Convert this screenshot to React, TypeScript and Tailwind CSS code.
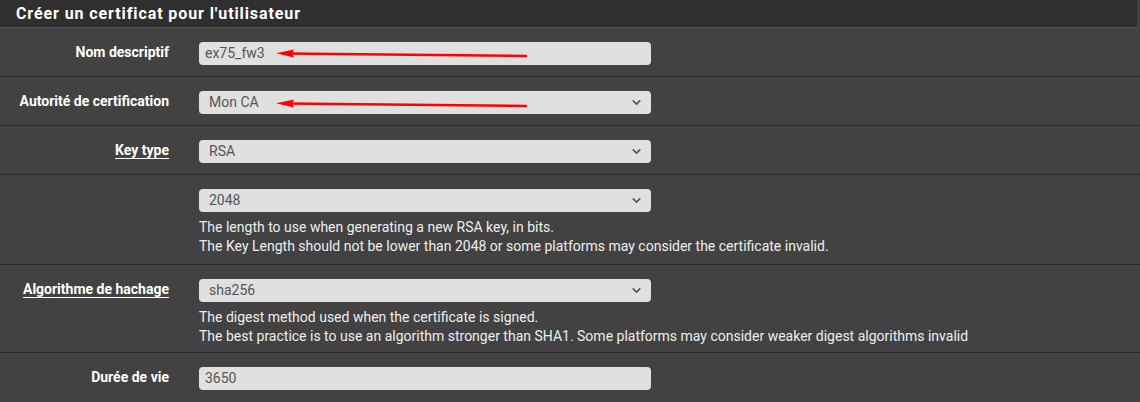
import { ChevronDown } from "lucide-react";

type Row = {
  label?: string;
  link?: boolean;
  value: string;
  select?: boolean;
  help?: string[];
  h: string;
};

const rows: Row[] = [
  { label: "Nom descriptif", value: "ex75_fw3", h: "h-[49px]" },
  { label: "Autorité de certification", value: "Mon CA", select: true, h: "h-[49px]" },
  { label: "Key type", link: true, value: "RSA", select: true, h: "h-[49px]" },
  {
    value: "2048",
    select: true,
    h: "h-[90px]",
    help: [
      "The length to use when generating a new RSA key, in bits.",
      "The Key Length should not be lower than 2048 or some platforms may consider the certificate invalid.",
    ],
  },
  {
    label: "Algorithme de hachage",
    link: true,
    value: "sha256",
    select: true,
    h: "h-[88px]",
    help: [
      "The digest method used when the certificate is signed.",
      "The best practice is to use an algorithm stronger than SHA1. Some platforms may consider weaker digest algorithms invalid",
    ],
  },
  { label: "Durée de vie", value: "3650", h: "h-[49px]" },
];

function Arrow({ top }: { top: number }) {
  // red hand-drawn arrow pointing left at the value
  return (
    <svg
      className="absolute left-[272px] pointer-events-none"
      style={{ top }}
      width="260"
      height="12"
      viewBox="0 0 260 12"
    >
      <line x1="14" y1="4.5" x2="254" y2="7" stroke="#ff0000" strokeWidth="2.5" strokeLinecap="round" />
      <polygon points="4,4.3 22,0.5 20,4.6 22,8.6" fill="#ff0000" />
    </svg>
  );
}

export default function App() {
  return (
    <div className="w-[1140px] h-[402px] overflow-hidden bg-[#424242] font-['Roboto',sans-serif] relative">
      <div className="h-[28px] bg-[#2f2f2f] border-b border-[#555555] flex items-center pl-[16px] mr-[3px]">
        <h2 className="text-[16px] font-bold text-white tracking-[0.9px]">
          Créer un certificat pour l'utilisateur
        </h2>
      </div>

      {rows.map((row, i) => (
        <div
          key={i}
          className={`flex ${row.h} ${i < rows.length - 1 ? "border-b border-[#2a2a2a]" : ""} pt-[14px]`}
        >
          <div className="w-[184px] pr-[15px] text-right shrink-0 leading-[20px]">
            {row.label && (
              <span
                className={`text-[14px] font-bold text-white ${row.link ? "underline underline-offset-[3px]" : ""}`}
              >
                {row.label}
              </span>
            )}
          </div>
          <div className="pl-[15px]">
            <div className="w-[452px] h-[23px] rounded-[4px] bg-[#e0e0e0] flex items-center justify-between px-[10px] text-[14px] text-[#555555]">
              <span className={row.select ? "" : "-ml-[4px]"}>{row.value}</span>
              {row.select && <ChevronDown size={13} strokeWidth={3} className="text-[#555555] -mr-[2px]" />}
            </div>
            {row.help && (
              <div className="mt-[6px] text-[14px] leading-[19px] text-[#eeeeee]">
                {row.help.map((h) => (
                  <div key={h}>{h}</div>
                ))}
              </div>
            )}
          </div>
        </div>
      ))}

      <Arrow top={49} />
      <Arrow top={99} />
    </div>
  );
}
